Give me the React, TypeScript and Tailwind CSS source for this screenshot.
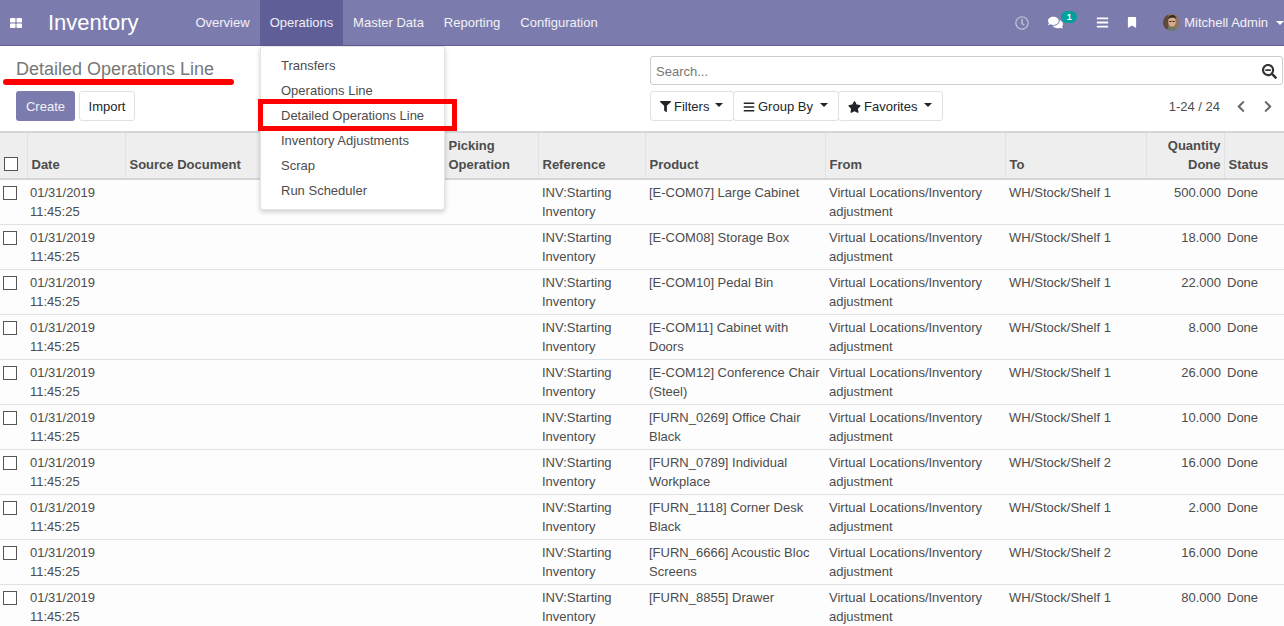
import React from 'react';
import { FaRegClock, FaComments, FaBookmark, FaFilter, FaStar, FaBars, FaChevronLeft, FaChevronRight, FaSearchMinus } from 'react-icons/fa';

const rows = [
  { product: '[E-COM07] Large Cabinet', to: 'WH/Stock/Shelf 1', qty: '500.000' },
  { product: '[E-COM08] Storage Box', to: 'WH/Stock/Shelf 1', qty: '18.000' },
  { product: '[E-COM10] Pedal Bin', to: 'WH/Stock/Shelf 1', qty: '22.000' },
  { product: '[E-COM11] Cabinet with Doors', to: 'WH/Stock/Shelf 1', qty: '8.000' },
  { product: '[E-COM12] Conference Chair (Steel)', to: 'WH/Stock/Shelf 1', qty: '26.000' },
  { product: '[FURN_0269] Office Chair Black', to: 'WH/Stock/Shelf 1', qty: '10.000' },
  { product: '[FURN_0789] Individual Workplace', to: 'WH/Stock/Shelf 2', qty: '16.000' },
  { product: '[FURN_1118] Corner Desk Black', to: 'WH/Stock/Shelf 1', qty: '2.000' },
  { product: '[FURN_6666] Acoustic Bloc Screens', to: 'WH/Stock/Shelf 2', qty: '16.000' },
  { product: '[FURN_8855] Drawer', to: 'WH/Stock/Shelf 1', qty: '80.000' },
];

const Caret = () => <span className="block w-0 h-0 border-x-[4px] border-x-transparent border-t-[4px] border-t-current" />;

const Th = ({ children, className = '' }: { children?: React.ReactNode; className?: string }) => (
  <th className={`border-l border-[#dee2e6] first:border-l-0 pl-[4px] pr-[3px] pt-[3px] pb-[4px] align-bottom text-left font-bold leading-[19px] ${className}`}>{children}</th>
);

const App: React.FC = () => {
  return (
    <div className="relative w-[1284px] h-[626px] overflow-hidden bg-white text-[13px] text-[#4c4c4c] font-['Liberation_Sans',Arial,sans-serif]">
      <nav className="h-[46px] bg-[#7c7bad] border-b border-[#5f5e97] flex items-stretch text-white">
        <div className="w-[32px] flex items-center justify-center">
          <svg viewBox="0 0 12 10" className="w-[12px] h-[10px]" fill="currentColor">
            <rect width="5.500" height="4.500" rx="0.800" />
            <rect x="6.500" width="5.500" height="4.500" rx="0.800" />
            <rect y="5.500" width="5.500" height="4.500" rx="0.800" />
            <rect x="6.500" y="5.500" width="5.500" height="4.500" rx="0.800" />
          </svg>
        </div>
        <div className="w-[153px] pl-[16px] text-[22px] leading-[45px]">Inventory</div>
        <div className="flex text-[13px] text-white/90">
          <span className="w-[75px] flex items-center justify-center">Overview</span>
          <span className="w-[83px] flex items-center justify-center bg-[#5f5e97]">Operations</span>
          <span className="w-[91px] flex items-center justify-center">Master Data</span>
          <span className="w-[76px] flex items-center justify-center">Reporting</span>
          <span className="w-[98px] flex items-center justify-center">Configuration</span>
        </div>
        <div className="ml-auto flex items-center">
          <FaRegClock className="w-[14px] h-[14px] text-white/50 mr-[19px]" />
          <div className="relative mr-[20px]">
            <FaComments className="w-[15px] h-[15px]" />
            <span className="absolute left-[13px] -top-[4px] w-[16px] h-[12px] rounded-[6px] bg-[#00a09d] text-[9px] leading-[12px] text-center font-bold">1</span>
          </div>
          <FaBars className="w-[13px] h-[13px] mr-[18px] ml-[13px]" />
          <FaBookmark className="w-[10px] h-[11px] mr-[26px]" />
          <svg viewBox="0 0 16 16" className="w-[17px] h-[17px] rounded-full mr-[4px]">
            <rect width="16" height="16" fill="#8d7561" />
            <path d="M0 0h5v16H0z" fill="#5d4a3c" />
            <path d="M5 7c0-3 1.500-5 3.500-5S12 4 12 7s-1.500 5-3.500 5S5 10 5 7z" fill="#d9a98c" />
            <path d="M4.500 5C5 2 7 1 9 1s3.500 1.500 3.500 4L11 3.500H7z" fill="#33251e" />
            <path d="M6 7h2M9 7h2" stroke="#2a2320" strokeWidth="1" />
            <path d="M3 16c.5-3 2.500-4 5.500-4s5 1 5.500 4z" fill="#6d7a6a" />
          </svg>
          <span className="text-white/90 mr-[8px]">Mitchell Admin</span>
          <span className="text-white"><Caret /></span>
        </div>
      </nav>

      <div className="h-[85px] flex">
        <div className="w-[650px] pl-[16px] pt-[12px]">
          <div className="text-[18px] leading-[22px] text-[#777777]">Detailed Operations Line</div>
          <div className="flex gap-[4px] mt-[11px]">
            <button className="w-[59px] h-[30px] pt-[1px] rounded-[3px] bg-[#7c7bad] text-white/90">Create</button>
            <button className="w-[56px] h-[30px] pt-[1px] rounded-[3px] bg-white border border-[#dee2e6] text-[#212529]">Import</button>
          </div>
        </div>
        <div className="flex-1 pt-[10px]">
          <div className="w-[633px] h-[29px] border border-[#ccc] rounded-[3px] flex items-center justify-between pl-[5px] pr-[5px]">
            <span className="text-[#777777] pt-[2px]">Search...</span>
            <FaSearchMinus className="w-[15px] h-[15px] mt-[1px] text-[#333]" />
          </div>
          <div className="flex items-center mt-[6px] text-[#212529]">
            <button className="w-[84px] h-[30px] pt-[1px] pl-[9px] bg-white border border-[#dee2e6] rounded-[3px] flex items-center">
              <FaFilter className="w-[11px] h-[11px] mr-[3px]" /> Filters <span className="ml-[6px] -mt-[4px]"><Caret /></span>
            </button>
            <button className="w-[106px] h-[30px] pt-[1px] pl-[9px] -ml-[1px] bg-white border border-[#dee2e6] rounded-[3px] flex items-center">
              <FaBars className="w-[12px] h-[12px] mr-[3px]" /> Group By <span className="ml-[7px] -mt-[4px]"><Caret /></span>
            </button>
            <button className="w-[105px] h-[30px] pt-[1px] pl-[9px] -ml-[1px] bg-white border border-[#dee2e6] rounded-[3px] flex items-center">
              <FaStar className="w-[13px] h-[12px] mr-[3px]" /> Favorites <span className="ml-[7px] -mt-[4px]"><Caret /></span>
            </button>
            <span className="ml-auto text-[#4c4c4c] mr-[15px] pt-[1px]">1-24 / 24</span>
            <FaChevronLeft className="w-[12px] h-[13px] text-[#666] mr-[15px]" />
            <FaChevronRight className="w-[12px] h-[13px] text-[#666] mr-[10px]" />
          </div>
        </div>
      </div>

      <table className="table-fixed border-collapse w-[1284px] border-t-2 border-[#d3d5d9]">
        <colgroup>
          <col className="w-[27px]" />
          <col className="w-[98px]" />
          <col className="w-[175px]" />
          <col className="w-[144px]" />
          <col className="w-[94px]" />
          <col className="w-[107px]" />
          <col className="w-[180px]" />
          <col className="w-[180px]" />
          <col className="w-[141px]" />
          <col className="w-[78px]" />
          <col className="w-[60px]" />
        </colgroup>
        <thead className="bg-[#eeeeee] border-b-2 border-[#d3d5d9]">
          <tr className="h-[45px]">
            <Th><span className="block w-[14px] h-[14px] border border-[#555] bg-white mb-[3px]" /></Th>
            <Th>Date</Th>
            <Th>Source Document</Th>
            <Th />
            <Th>Picking Operation</Th>
            <Th>Reference</Th>
            <Th>Product</Th>
            <Th>From</Th>
            <Th>To</Th>
            <Th className="text-right">Quantity Done</Th>
            <Th>Status</Th>
          </tr>
        </thead>
        <tbody className="bg-[#fdfdfd]">
          {rows.map((r, i) => (
            <tr key={i} className="h-[45px] border-b border-[#dee2e6] align-top leading-[19px]">
              <td className="pl-[3px] pt-[6px]"><span className="block w-[14px] h-[14px] border border-[#555] bg-white" /></td>
              <td className="px-[3px] pt-[3px]">01/31/2019<br />11:45:25</td>
              <td />
              <td />
              <td />
              <td className="pl-[4px] pr-[3px] pt-[3px]">INV:Starting Inventory</td>
              <td className="pl-[4px] pr-[3px] pt-[3px]">{r.product}</td>
              <td className="pl-[4px] pr-[3px] pt-[3px]">Virtual Locations/Inventory adjustment</td>
              <td className="pl-[4px] pr-[3px] pt-[3px]">{r.to}</td>
              <td className="px-[3px] pt-[3px] text-right">{r.qty}</td>
              <td className="px-[3px] pt-[3px]">Done</td>
            </tr>
          ))}
        </tbody>
      </table>

      <div className="absolute left-[260px] top-[46px] w-[185px] h-[164px] bg-white border border-[#e4e4e4] rounded-[3px] shadow-[0_2px_5px_rgba(0,0,0,0.2)] pt-[6px] text-[#4c4c4c]">
        {['Transfers', 'Operations Line', 'Detailed Operations Line', 'Inventory Adjustments', 'Scrap', 'Run Scheduler'].map((m) => (
          <div key={m} className="h-[25px] pl-[20px] leading-[25px]">{m}</div>
        ))}
      </div>
      <div className="absolute left-[258px] top-[99px] w-[199px] h-[32px] border-[5px] border-[#ff0000]" />
      <div className="absolute left-[3px] top-[79px] w-[231px] h-[6px] rounded-[3px] bg-[#ff0000]" />
    </div>
  );
};

export default App;
